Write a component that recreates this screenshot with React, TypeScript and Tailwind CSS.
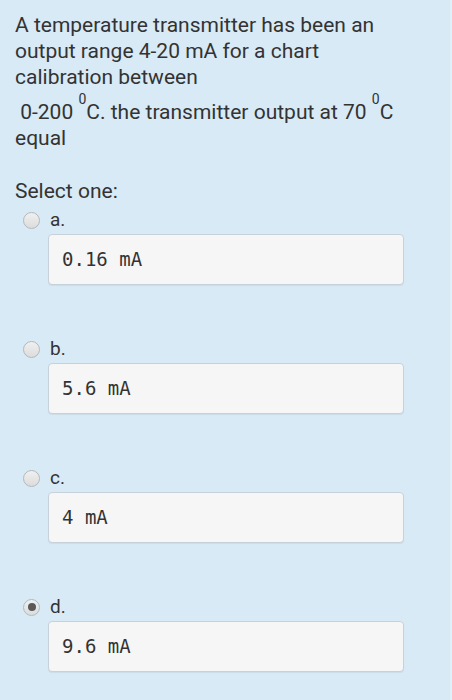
const options = [
  { key: 'a', value: '0.16 mA', checked: false },
  { key: 'b', value: '5.6 mA', checked: false },
  { key: 'c', value: '4 mA', checked: false },
  { key: 'd', value: '9.6 mA', checked: true },
]

function Radio({ checked }: { checked: boolean }) {
  return (
    <span className="flex h-[17px] w-[17px] items-center justify-center rounded-full border border-[#b4b8bc] bg-gradient-to-b from-[#f0f0f0] to-[#dcdcdc]">
      {checked && <span className="h-[8px] w-[8px] rounded-full bg-[#595959]" />}
    </span>
  )
}

export default function App() {
  return (
    <div className="h-[700px] w-[452px] bg-[#e1eff8] font-['Roboto',sans-serif] text-[#333]">
      <div className="h-full w-[450px] bg-[#d8eaf6] pt-[12px]">
        <div className="px-[15px] text-[21px] leading-[26px]">
          <p>
            A temperature transmitter has been an
            <br />
            output range 4-20 mA for a chart
            <br />
            calibration between
          </p>
          <p className="mt-[9px]">
            &nbsp;0-200 <sup className="top-[-15px] text-[14px]">0</sup>C. the transmitter output at 70 <sup className="top-[-15px] text-[14px]">0</sup>C
            <br />
            equal
          </p>
          <p className="mt-[27px]">Select one:</p>
        </div>

        <div className="mt-[4px] flex flex-col gap-[52px]">
          {options.map((o) => (
            <div key={o.key}>
              <div className="flex h-[24px] items-center">
                <div className="ml-[23px] w-[27px]">
                  <Radio checked={o.checked} />
                </div>
                <span className="text-[19px]">{o.key}.</span>
              </div>
              <div className="ml-[48px] mt-[2px] flex h-[51px] w-[356px] items-center rounded-[4px] border border-[#c7d1da] bg-[#f6f6f7] pl-[13px] font-['DejaVu_Sans_Mono',monospace] text-[19px] text-[#333] shadow-[0_1px_1px_rgba(0,0,0,0.06)]">
                {o.value}
              </div>
            </div>
          ))}
        </div>
      </div>
    </div>
  )
}
